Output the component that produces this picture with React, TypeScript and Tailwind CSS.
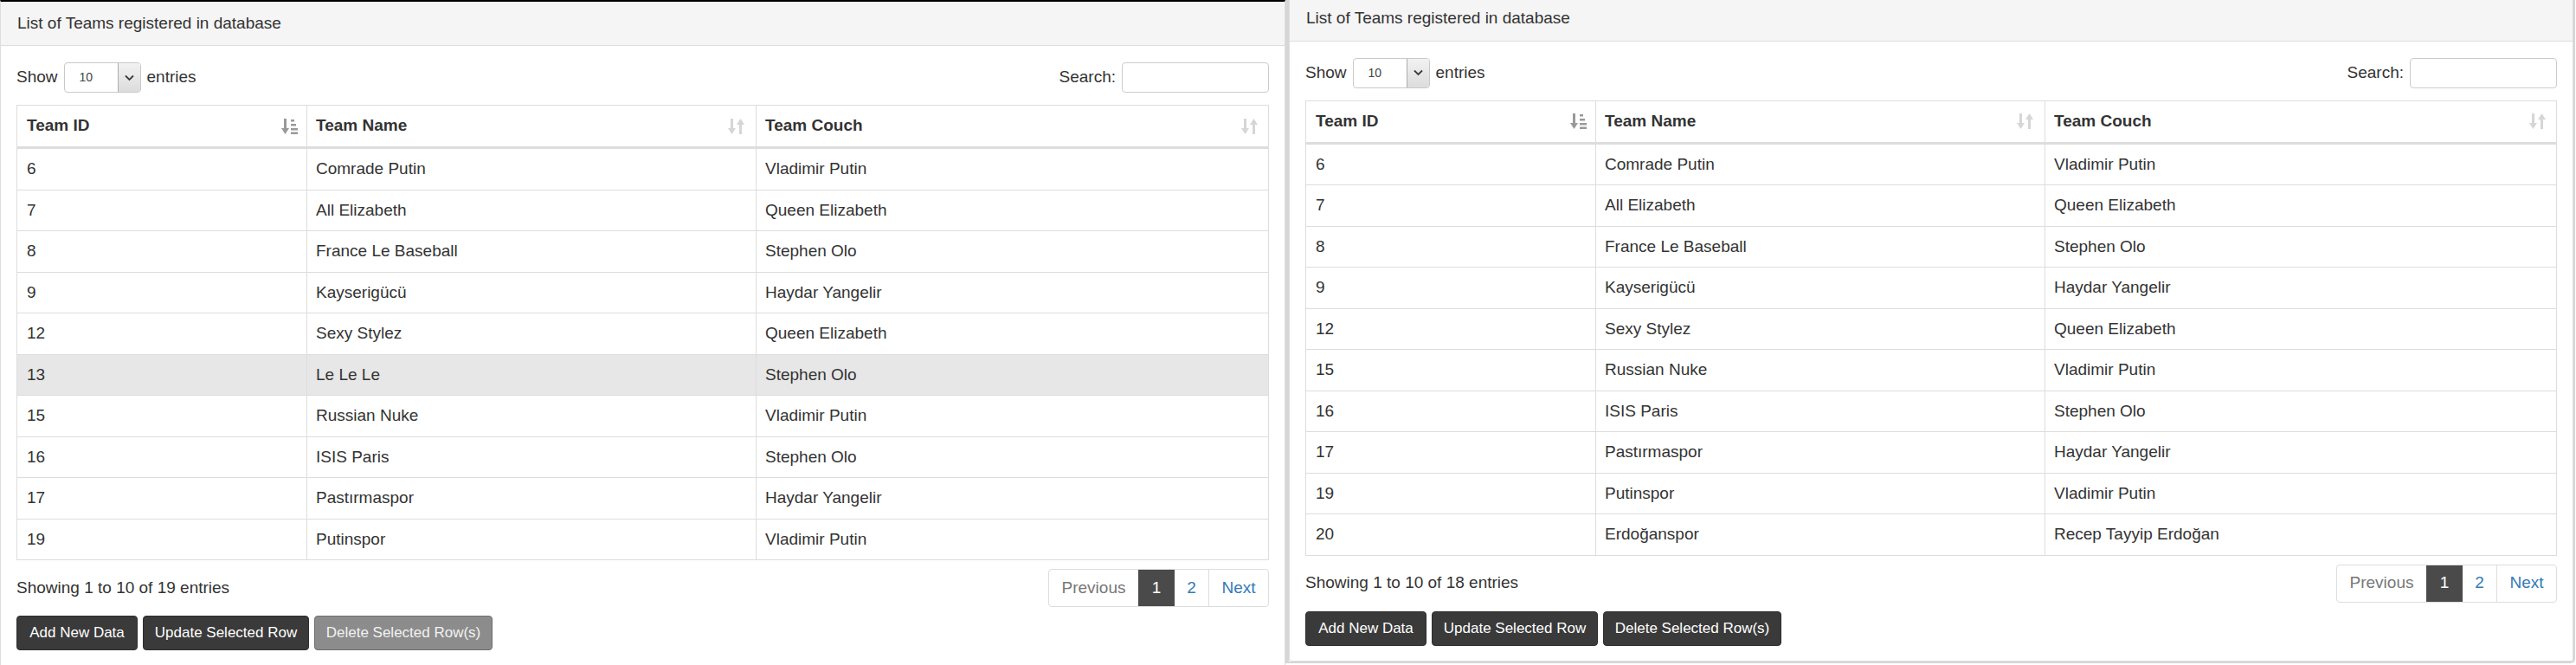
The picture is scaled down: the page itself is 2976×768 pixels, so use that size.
import React from "react";

type Team = { id: number; name: string; couch: string };

const leftTeams: Team[] = [
  { id: 6, name: "Comrade Putin", couch: "Vladimir Putin" },
  { id: 7, name: "All Elizabeth", couch: "Queen Elizabeth" },
  { id: 8, name: "France Le Baseball", couch: "Stephen Olo" },
  { id: 9, name: "Kayserigücü", couch: "Haydar Yangelir" },
  { id: 12, name: "Sexy Stylez", couch: "Queen Elizabeth" },
  { id: 13, name: "Le Le Le", couch: "Stephen Olo" },
  { id: 15, name: "Russian Nuke", couch: "Vladimir Putin" },
  { id: 16, name: "ISIS Paris", couch: "Stephen Olo" },
  { id: 17, name: "Pastırmaspor", couch: "Haydar Yangelir" },
  { id: 19, name: "Putinspor", couch: "Vladimir Putin" },
];

const rightTeams: Team[] = [
  { id: 6, name: "Comrade Putin", couch: "Vladimir Putin" },
  { id: 7, name: "All Elizabeth", couch: "Queen Elizabeth" },
  { id: 8, name: "France Le Baseball", couch: "Stephen Olo" },
  { id: 9, name: "Kayserigücü", couch: "Haydar Yangelir" },
  { id: 12, name: "Sexy Stylez", couch: "Queen Elizabeth" },
  { id: 15, name: "Russian Nuke", couch: "Vladimir Putin" },
  { id: 16, name: "ISIS Paris", couch: "Stephen Olo" },
  { id: 17, name: "Pastırmaspor", couch: "Haydar Yangelir" },
  { id: 19, name: "Putinspor", couch: "Vladimir Putin" },
  { id: 20, name: "Erdoğanspor", couch: "Recep Tayyip Erdoğan" },
];

const SortBoth = () => (
  <svg width="20" height="20" viewBox="0 0 20 20" className="fill-[#d6d6d6]">
    <rect x="3" y="1" width="3" height="12" />
    <polygon points="0,12 9,12 4.5,19" />
    <rect x="13" y="7" width="3" height="12" />
    <polygon points="10,8 19,8 14.5,1" />
  </svg>
);

const SortAsc = () => (
  <svg width="20" height="20" viewBox="0 0 20 20" className="fill-[#999]">
    <rect x="3" y="1" width="3" height="12" />
    <polygon points="0,12 9,12 4.5,19" />
    <rect x="11" y="2" width="4" height="2.5" />
    <rect x="11" y="7" width="6" height="2.5" />
    <rect x="11" y="12" width="8" height="2.5" />
    <rect x="11" y="16.5" width="8" height="2.5" />
  </svg>
);

const cols = "grid grid-cols-[334px_519px_1fr]";

type PanelProps = {
  teams: Team[];
  total: number;
  selected?: number;
  deleteDisabled?: boolean;
};

const TeamsPanel: React.FC<PanelProps> = ({
  teams,
  total,
  selected,
  deleteDisabled,
}) => {
  return (
    <div className="flex flex-col text-[19px] text-[#333]">
      <div className="h-[51px] bg-[#f5f5f5] border-b border-[#ddd] flex items-center pl-[19px]">
        List of Teams registered in database
      </div>
      <div className="px-[18px] pt-[19px]">
        <div className="flex justify-between items-center h-[35px]">
          <div className="flex items-center gap-[7px]">
            <span>Show</span>
            <div className="w-[89px] h-[35px] border border-[#c9c9c9] rounded-[4px] flex overflow-hidden">
              <span className="flex-1 flex items-center pl-[17px] text-[14px] text-[#444]">
                10
              </span>
              <span className="w-[26px] border-l border-[#adadad] bg-gradient-to-b from-[#f2f2f2] to-[#dcdcdc] flex items-center justify-center">
                <svg width="11" height="8" viewBox="0 0 11 8">
                  <polyline
                    points="1,1.5 5.5,6 10,1.5"
                    fill="none"
                    stroke="#3c3c3c"
                    strokeWidth="1.8"
                  />
                </svg>
              </span>
            </div>
            <span>entries</span>
          </div>
          <div className="flex items-center gap-[7px]">
            <span>Search:</span>
            <div className="w-[170px] h-[35px] border border-[#ccc] rounded-[4px] bg-white" />
          </div>
        </div>

        <div className="mt-[14px] border-x border-t border-[#ddd]">
          <div className={`${cols} h-[50px] border-b-[3px] border-[#ddd] font-bold`}>
            <div className="flex items-center justify-between pl-[11px] pr-[9px]">
              <span>Team ID</span>
              <SortAsc />
            </div>
            <div className="flex items-center justify-between pl-[10px] pr-[12px] border-l border-[#ddd]">
              <span>Team Name</span>
              <SortBoth />
            </div>
            <div className="flex items-center justify-between pl-[10px] pr-[11px] border-l border-[#ddd]">
              <span>Team Couch</span>
              <SortBoth />
            </div>
          </div>
          {teams.map((t) => (
            <div
              key={t.id}
              className={`${cols} h-[47.5px] border-b border-[#ddd] ${
                t.id === selected ? "bg-[#e7e7e7]" : "bg-white"
              }`}
            >
              <div className="flex items-center pl-[11px]">{t.id}</div>
              <div className="flex items-center pl-[10px] border-l border-[#ddd]">
                {t.name}
              </div>
              <div className="flex items-center pl-[10px] border-l border-[#ddd]">
                {t.couch}
              </div>
            </div>
          ))}
        </div>

        <div className="mt-[10px] h-[44px] flex justify-between items-center">
          <span>
            Showing 1 to 10 of {total} entries
          </span>
          <div className="flex h-[44px] border border-[#ddd] rounded-[4px] overflow-hidden">
            <span className="w-[103px] flex items-center justify-center text-[#777]">
              Previous
            </span>
            <span className="w-[42px] flex items-center justify-center bg-[#4a4a4a] text-white">
              1
            </span>
            <span className="w-[40px] flex items-center justify-center text-[#337ab7] border-r border-[#ddd]">
              2
            </span>
            <span className="w-[68px] flex items-center justify-center text-[#337ab7]">
              Next
            </span>
          </div>
        </div>

        <div className="mt-[10px] flex gap-[6px] text-[17px] pb-[17px]">
          <button className="w-[140px] h-[40px] rounded-[4px] bg-[#3a3a3a] text-white border border-[#2e2e2e]">
            Add New Data
          </button>
          <button className="w-[192px] h-[40px] rounded-[4px] bg-[#3a3a3a] text-white border border-[#2e2e2e]">
            Update Selected Row
          </button>
          <button
            className={`w-[206px] h-[40px] rounded-[4px] border ${
              deleteDisabled
                ? "bg-[#8c8c8c] border-[#6e6e6e] text-[#f2f2f2]"
                : "bg-[#3a3a3a] border-[#2e2e2e] text-white"
            }`}
          >
            Delete Selected Row(s)
          </button>
        </div>
      </div>
    </div>
  );
};

export default function App() {
  return (
    <div className="w-[2976px] h-[768px] overflow-hidden bg-white flex items-start font-['Liberation_Sans',Arial,sans-serif]">
      <div className="w-[1485px] shrink-0 border-t-2 border-t-black border-x border-[#ddd]">
        <TeamsPanel teams={leftTeams} total={19} selected={13} deleteDisabled />
      </div>
      <div className="w-[1490px] shrink-0 -mt-[3.5px] border-l-4 border-b-2 border-r-2 border-[#d6d6d6] rounded-br-[5px]">
        <div className="border-x border-b border-[#ddd] rounded-b-[4px]">
          <TeamsPanel teams={rightTeams} total={18} />
        </div>
      </div>
    </div>
  );
}
